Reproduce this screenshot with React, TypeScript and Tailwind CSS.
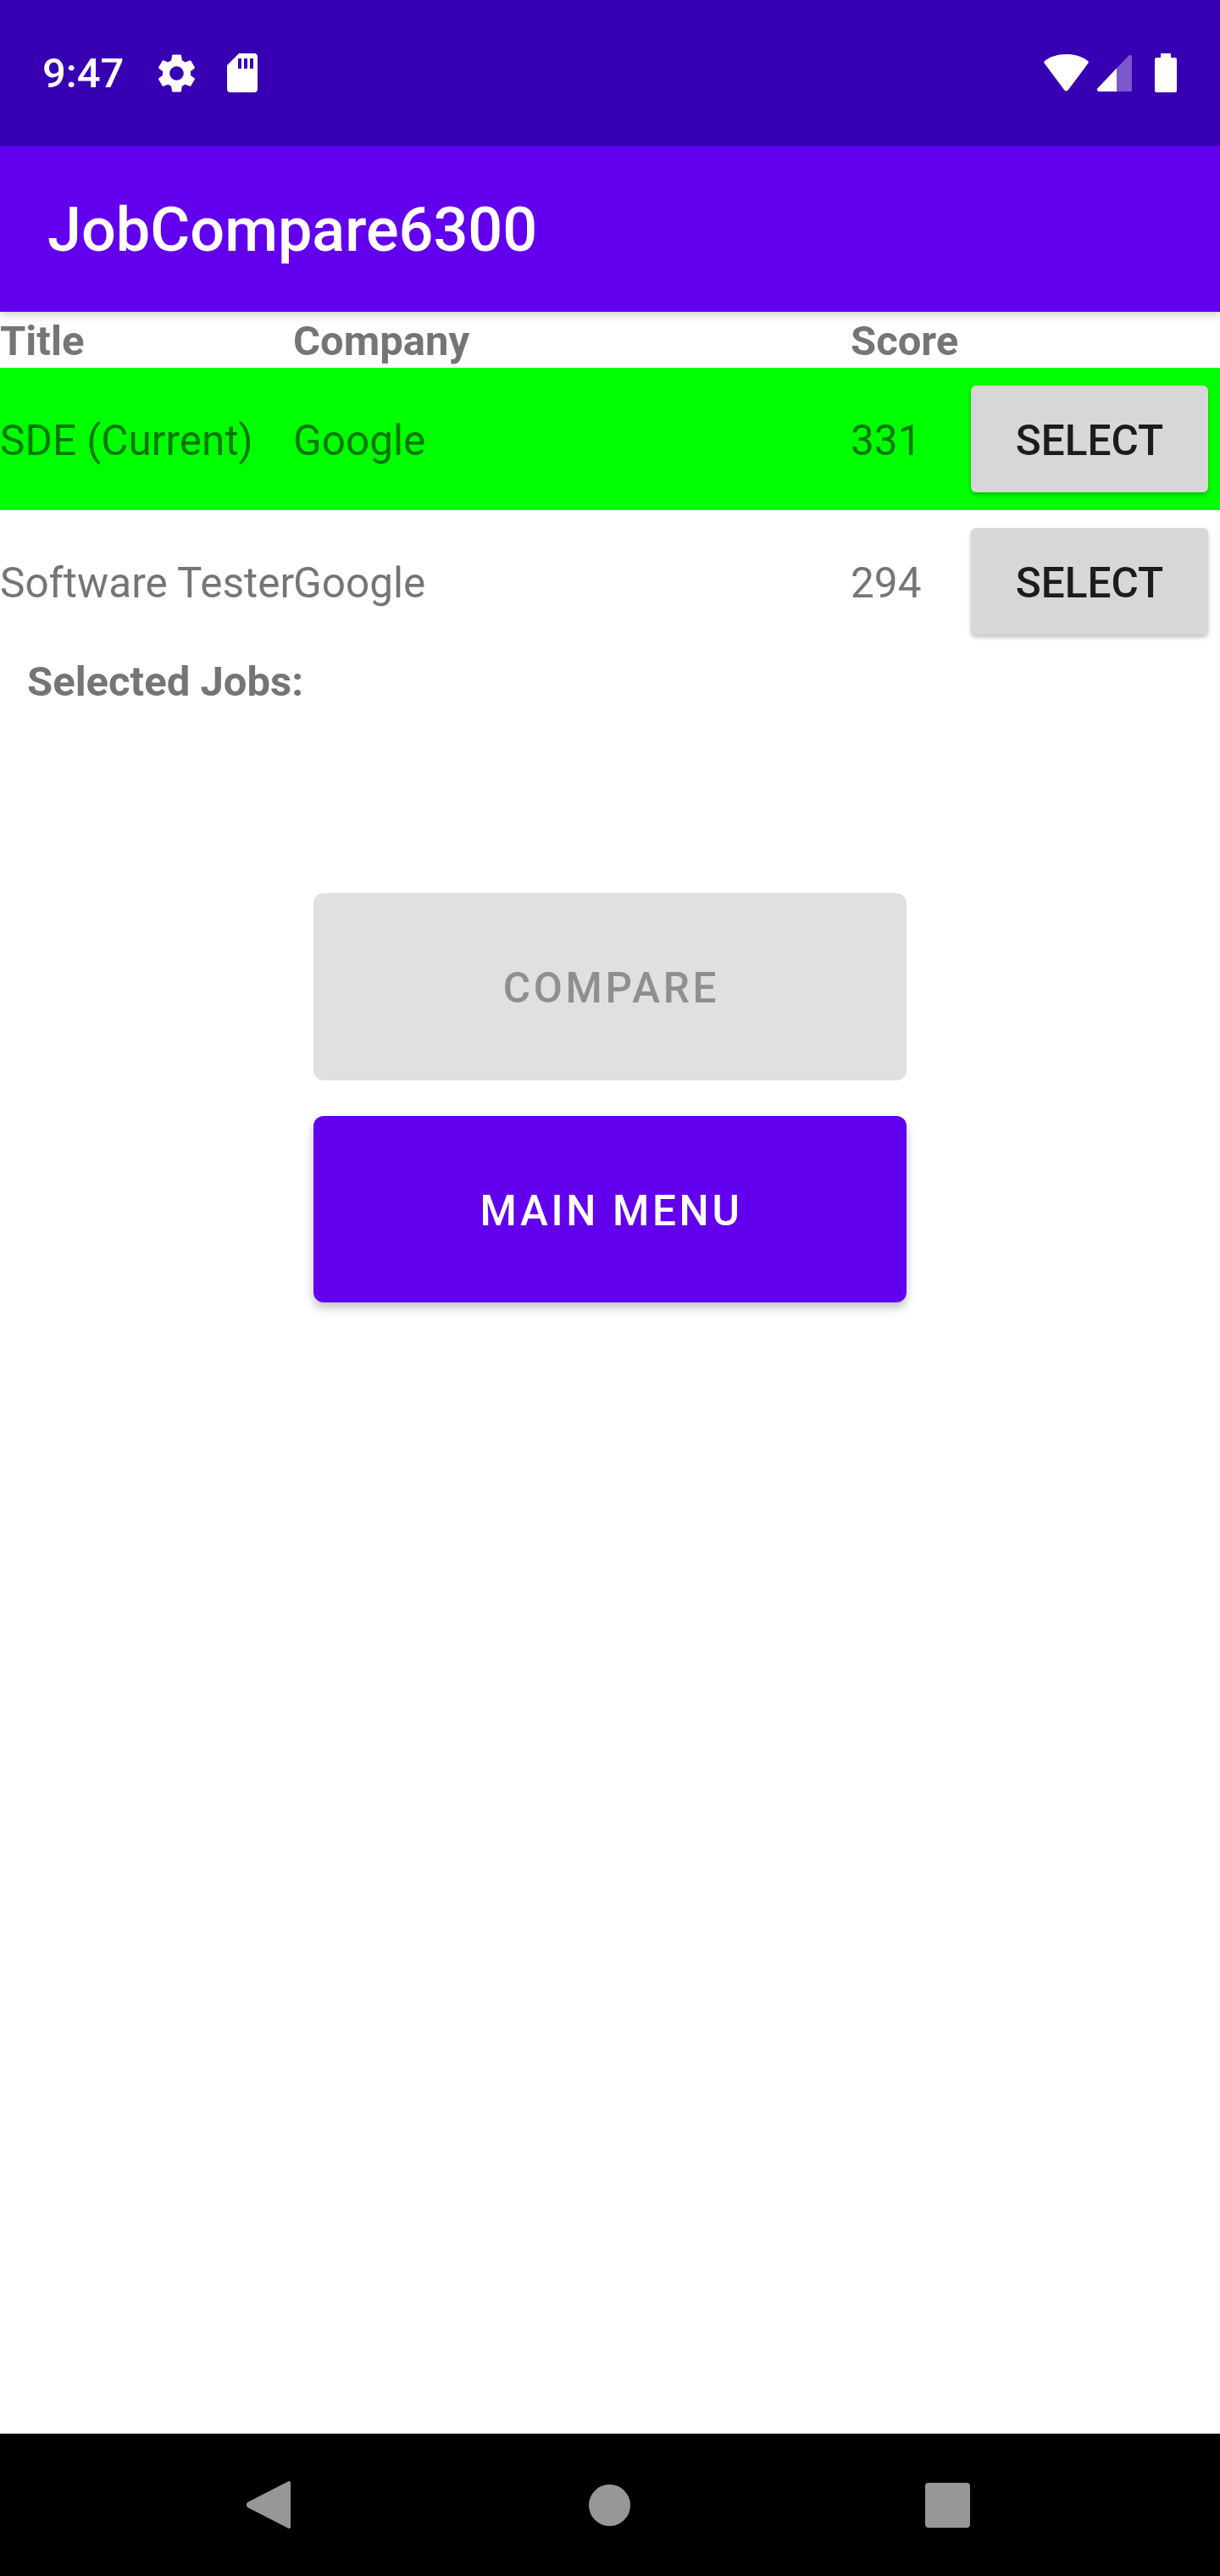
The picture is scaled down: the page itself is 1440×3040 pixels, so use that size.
const font = { fontFamily: "Roboto, 'Liberation Sans', sans-serif" };

function SelectButton() {
  return (
    <button className="w-[280px] h-[126px] pt-[5px] rounded-[6px] bg-[#d6d7d7] text-[#1c1c1c] text-[49.5px] font-medium leading-none shadow-[0_3px_5px_rgba(0,0,0,0.25)]">
      SELECT
    </button>
  );
}

function Row({ title, score, current }: { title: string; score: string; current?: boolean }) {
  return (
    <div className={`flex items-center h-[168px] text-[49.5px] leading-none text-[rgba(0,0,0,0.54)] ${current ? "bg-[#00ff00]" : "bg-white"}`}>
      <div className="w-[346px] pt-[6px] shrink-0 whitespace-nowrap">{title}</div>
      <div className="w-[658px] pt-[6px] shrink-0">Google</div>
      <div className="w-[142px] pt-[6px] shrink-0">{score}</div>
      <SelectButton />
    </div>
  );
}

export default function App() {
  return (
    <div style={font} className="flex flex-col w-[1440px] h-[3040px] bg-white overflow-hidden">
      <div className="relative z-10 shadow-[0_4px_10px_rgba(0,0,0,0.18)]">
        <div className="flex items-center h-[172px] bg-[#3700b3] text-white">
          <span className="ml-[50px] w-[97px] text-[49px] leading-none font-medium whitespace-nowrap">9:47</span>
          <svg className="ml-[34px]" width="55" height="55" viewBox="0 0 24 24" fill="#fff">
            <path d="M19.14 12.94c.04-.3.06-.61.06-.94 0-.32-.02-.64-.07-.94l2.03-1.58a.49.49 0 0 0 .12-.61l-1.92-3.32a.488.488 0 0 0-.59-.22l-2.39.96c-.5-.38-1.03-.7-1.62-.94l-.36-2.54a.484.484 0 0 0-.48-.41h-3.84c-.24 0-.43.17-.47.41l-.36 2.54c-.59.24-1.13.57-1.62.94l-2.39-.96c-.22-.08-.47 0-.59.22L2.74 8.87c-.12.21-.08.47.12.61l2.03 1.58c-.05.3-.09.63-.09.94s.02.64.07.94l-2.03 1.58a.49.49 0 0 0-.12.61l1.92 3.32c.12.22.37.29.59.22l2.39-.96c.5.38 1.03.7 1.62.94l.36 2.54c.05.24.24.41.48.41h3.84c.24 0 .44-.17.47-.41l.36-2.54c.59-.24 1.13-.56 1.62-.94l2.39.96c.22.08.47 0 .59-.22l1.92-3.32c.12-.22.07-.47-.12-.61l-2.01-1.58zM12 15.6c-1.98 0-3.6-1.62-3.6-3.6s1.62-3.6 3.6-3.6 3.6 1.62 3.6 3.6-1.62 3.6-3.6 3.6z" />
          </svg>
          <svg className="ml-[32px]" width="36" height="46" viewBox="0 0 36 46" fill="#fff">
            <path fillRule="evenodd" d="M14 0H32a4 4 0 0 1 4 4V42a4 4 0 0 1-4 4H4a4 4 0 0 1-4-4V14ZM13 6V18H17V6ZM20 6V18H24V6ZM27 6V18H31V6Z" />
          </svg>
          <svg className="ml-[928px]" width="53" height="44" viewBox="0 0 53 44" fill="#fff">
            <path d="M26.5 0C37 0 46 3 52 8a2 2 0 0 1 .4 2.6L28.5 42.600a2.500 2.500 0 0 1-4 0L.6 10.600A2 2 0 0 1 1 8C7 3 16 0 26.500 0Z" />
          </svg>
          <svg className="ml-[9px]" width="42" height="43" viewBox="0 0 42 43">
            <path fill="#fff" fillOpacity="0.35" d="M24 15.500 38.500.6A2 2 0 0 1 42 2V41a2 2 0 0 1-2 2H24Z" />
            <path fill="#fff" d="M24 15.500V43H3a2.200 2.200 0 0 1-1.500-3.800Z" />
          </svg>
          <svg className="ml-[27px]" width="26" height="46" viewBox="0 0 26 46" fill="#fff">
            <path d="M7 0H19V5H24a2 2 0 0 1 2 2V44a2 2 0 0 1-2 2H2a2 2 0 0 1-2-2V7a2 2 0 0 1 2-2H7Z" />
          </svg>
        </div>
        <div className="flex items-center h-[196px] bg-[#6200ee] pl-[56px] pt-[4px] text-white text-[72px] font-medium leading-none">
          JobCompare6300
        </div>
      </div>

      <main className="flex-1 flex flex-col">
        <div className="flex items-center h-[66px] pt-[3px] text-[49px] font-bold leading-none text-[#757575]">
          <div className="w-[346px] shrink-0">Title</div>
          <div className="w-[658px] shrink-0">Company</div>
          <div>Score</div>
        </div>
        <Row title="SDE (Current)" score="331" current />
        <Row title="Software Tester" score="294" />
        <div className="pl-[32px] text-[49px] font-bold leading-[70px] text-[#757575]">Selected Jobs:</div>
        <div className="ml-[370px] mt-[214px] flex flex-col gap-[42px] w-[700px]">
          <button className="h-[221px] pt-[4px] pl-[3px] rounded-[12px] bg-[#e0e0e0] text-[#8f8f8f] text-[49.5px] font-medium tracking-[3.7px]">COMPARE</button>
          <button className="h-[220px] pt-[4px] pl-[3px] rounded-[12px] bg-[#6200ee] text-white text-[49.5px] font-medium tracking-[3.7px] shadow-[0_6px_12px_rgba(0,0,0,0.25)]">MAIN MENU</button>
        </div>
      </main>

      <nav className="flex items-center h-[168px] bg-black">
        <svg className="ml-[291px]" width="52" height="56" viewBox="0 0 52 56" fill="#979797">
          <path d="M50 0a2 2 0 0 1 2 2V54a2 2 0 0 1-2 2 2 2 0 0 1-1.600-.8L1.200 31a4.500 4.500 0 0 1 0-6L48.400.8A2 2 0 0 1 50 0Z" />
        </svg>
        <div className="ml-[352px] w-[49px] h-[49px] rounded-full bg-[#979797]" />
        <div className="ml-[348px] w-[53px] h-[53px] rounded-[4px] bg-[#979797]" />
      </nav>
    </div>
  );
}
